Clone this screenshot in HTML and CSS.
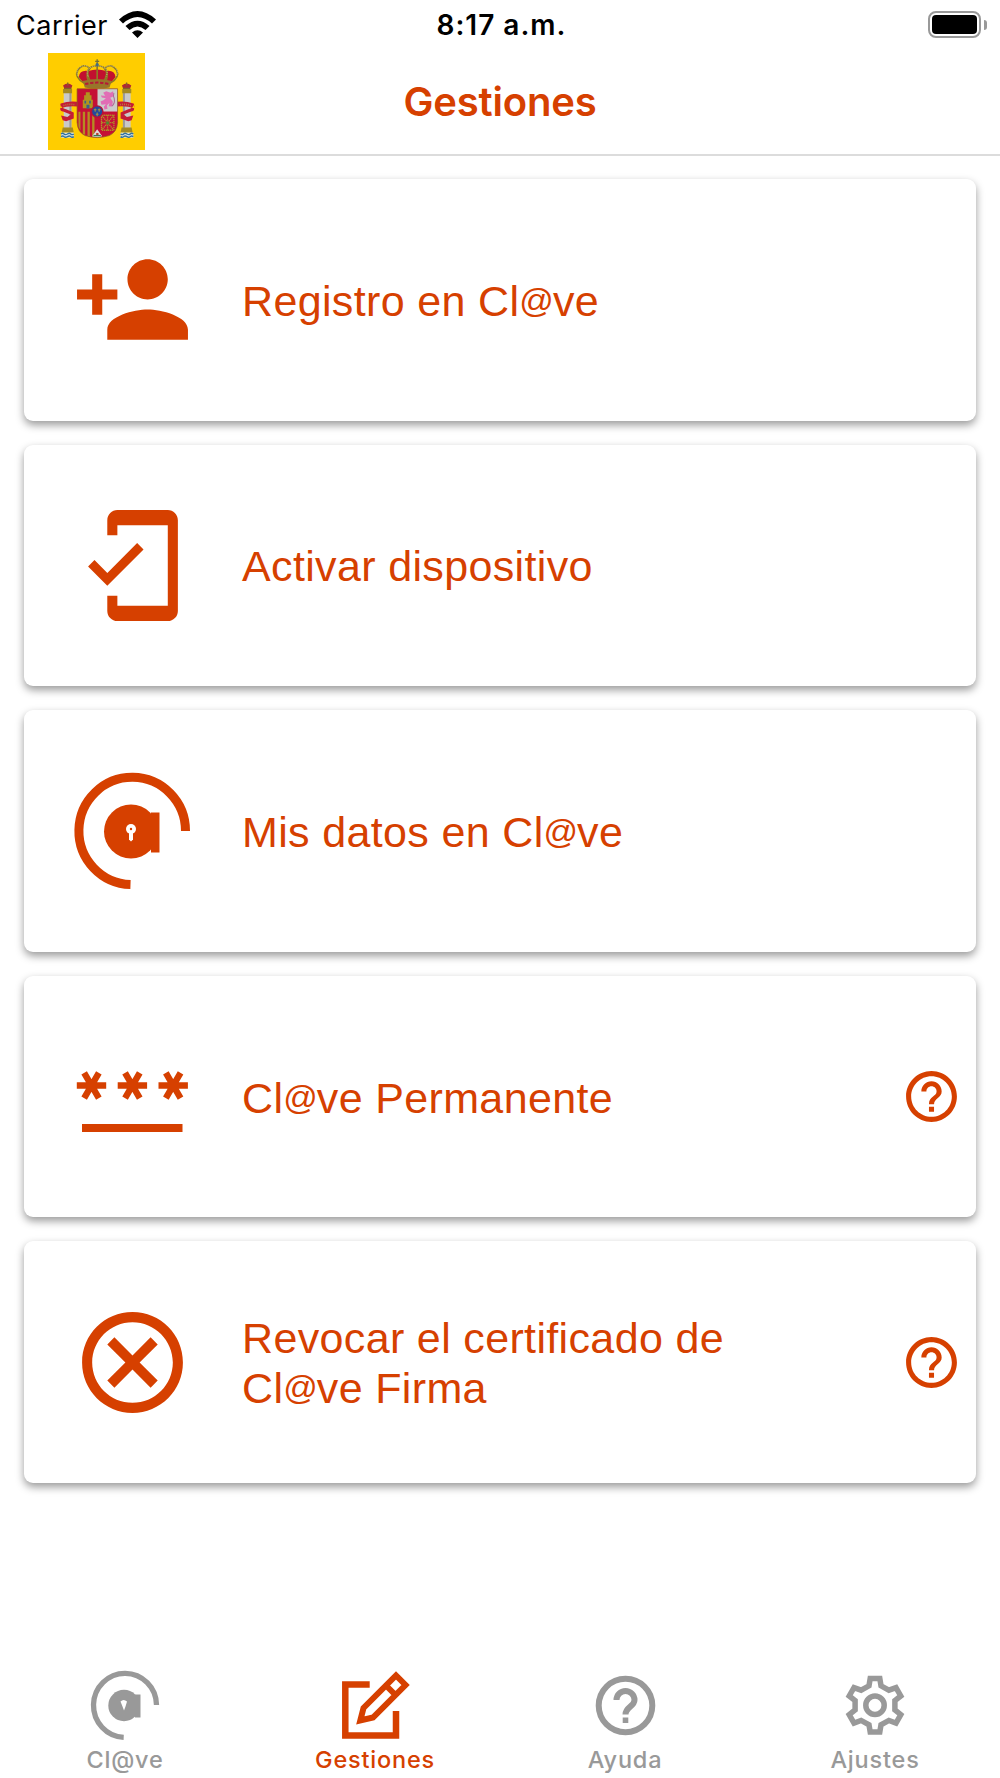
FILE: index.html
```html
<!DOCTYPE html>
<html lang="es">
<head>
    <meta charset="UTF-8">
    <meta name="viewport" content="width=device-width, initial-scale=1.0">
    <title>Gestiones</title>
    <link rel="stylesheet" href="styles.css">
</head>
<body>

    <div class="status-bar">
        <div class="carrier">
            <span>Carrier</span>
            <svg class="wifi" viewBox="0 0 37 27">
                <path d="M0 8.500Q18.500-8.500 37 8.500L33 12.500Q18.500-.5 4 12.500zM6.500 15Q18.500 4.500 30.500 15L26.500 19Q18.500 12 10.500 19zM13 21.500Q18.500 17 24 21.500L18.500 27z"/>
            </svg>
        </div>
        <div class="time">8:17 a.m.</div>
        <div class="battery">
            <div class="battery-body"></div>
            <div class="battery-tip"></div>
        </div>
    </div>

    <header class="header">
        <svg class="flag" viewBox="0 0 290 290">
            <rect width="290" height="290" fill="#ffcd00"/>
            <!-- crown -->
            <path d="M92 72Q95 50 120 54Q147 44 174 54Q199 50 202 72L186 92H108z" fill="#c2102f"/>
            <g fill="none" stroke="#8f7a24" stroke-width="5">
                <path d="M108 90Q78 72 89 51Q106 28 125 46Q112 62 120 82"/>
                <path d="M186 90Q216 72 205 51Q188 28 169 46Q182 62 174 82"/>
                <path d="M125 82Q105 40 147 38Q189 40 169 82M147 38V84"/>
            </g>
            <g fill="none" stroke="#e5dfbd" stroke-width="2" stroke-dasharray="3 3">
                <path d="M89 68Q80 42 108 38Q117 37 124 46M205 68Q214 42 186 38Q177 37 170 46M120 70Q108 42 147 38Q186 42 174 70"/>
            </g>
            <path d="M147 19V39M141 25h12" stroke="#777333" stroke-width="4"/>
            <circle cx="147" cy="35" r="5" fill="#446d83"/>
            <path d="M104 84Q147 72 190 84L184 103Q147 110 110 103z" fill="#98752a"/>
            <path d="M111 93Q147 84 183 93" fill="none" stroke="#b51937" stroke-width="6" stroke-dasharray="10 5"/>
            <!-- pillars -->
            <g id="pillar">
                <path d="M47 112h23v112H47z" fill="#c9c9c9"/>
                <path d="M64 112h6v112h-6z" fill="#999"/>
                <path d="M45 108h27v12H45zM44 223h30l3 15H41z" fill="#a48a22"/>
                <path d="M45 97q14-11 28 0l-4 10H49z" fill="#ad2836"/>
                <path d="M59 88v9M48 106h22" stroke="#806329" stroke-width="4"/>
                <path d="M39 238h38v15H39z" fill="#dce6e8"/>
                <path d="M39 242q5-4 9 0t10 0t10 0t9 0M39 250q5-4 9 0t10 0t10 0t9 0" fill="none" stroke="#33719c" stroke-width="4"/>
                <path d="M88 146Q64 142 38 151L36 165Q61 157 88 160zM37 151q1 14 17 17l23 10v18l-23 8-10-3-5-14 19 4 10-7-23-9Q33 176 37 151" fill="#c51c36"/>
                <path d="M46 157Q65 151 81 155" fill="none" stroke="#b67741" stroke-width="5" stroke-dasharray="3 3"/>
            </g>
            <use href="#pillar" transform="translate(294 0) scale(-1 1)"/>
            <!-- shield -->
            <path d="M87 107h121v101q-2 29-25 39-20 6-36 6t-36-6q-22-10-24-39z" fill="#c51035"/>
            <path d="M148 107h60v68h-60z" fill="#ccc"/>
            <path d="M91 176h6v56l-6-12zM104 176h7v69l-7-4zM118 176h7v74l-7-2zM132 176h7v76l-7-1z" fill="#b58c22"/>
            <path d="M104 165v-25h4v-14h5v-9h12v9h5v14h4v25z" fill="#b1931f"/>
            <path d="M115 166v-11h9v11M109 143h5v8h-5zM123 143h5v8h-5z" fill="#38628a"/>
            <path d="M165 119l9-5 13 5 8-5-1 17-8 3 8 12-3 14-10-1 3-10-8 8 2 10-9 2-2-8 6-8-13 2-3-10 9-4 7-6-12-2-3-6 13 1z" fill="#e16db5"/>
            <path d="M197 119q-3 9 1 17 3 15-7 23" fill="none" stroke="#ae6893" stroke-width="3"/>
            <g fill="none" stroke="#b19428" stroke-width="4" stroke-dasharray="4 2">
                <rect x="160" y="186" width="37" height="45"/>
                <path d="M178 186v48M160 208h38M161 187l35 43M196 187l-35 43"/>
            </g>
            <circle cx="178" cy="209" r="5" fill="#54832f"/>
            <circle cx="147" cy="175" r="19" fill="#b51239"/>
            <circle cx="147" cy="175" r="15" fill="#21499d"/>
            <path d="M137 170h8M149 170h8M143 183h8M141 166v10M153 166v10M147 178v11" stroke="#a69345" stroke-width="3"/>
            <path d="M147 228l15 21q-15 6-30 0z" fill="#ddd"/>
            <path d="M144 239h7v8h-7z" fill="#b74230"/>
            <path d="M136 247h22" stroke="#3e7a53" stroke-width="4"/>
            <path d="M87 107h121v101q-2 29-25 39-20 6-36 6t-36-6q-22-10-24-39z" fill="none" stroke="#8a5a20" stroke-width="2"/>
        </svg>
        <h1>Gestiones</h1>
    </header>

    <main class="cards">
        <div class="card">
            <svg class="card-icon" viewBox="0 0 24 24">
                <path d="M15 12c2.210 0 4-1.790 4-4s-1.790-4-4-4-4 1.790-4 4 1.790 4 4 4zm-9-2V7H4v3H1v2h3v3h2v-3h3v-2H6zm9 4c-2.670 0-8 1.340-8 4v2h16v-2c0-2.660-5.330-4-8-4z"/>
            </svg>
            <span class="card-title">Registro en Cl<span class="at">@</span>ve</span>
        </div>

        <div class="card">
            <svg class="card-icon" viewBox="0 0 24 24">
                <path d="M19 1H9c-1.100 0-2 .9-2 2v3h2V4h10v16H9v-2H7v3c0 1.100.9 2 2 2h10c1.100 0 2-.9 2-2V3c0-1.100-.9-2-2-2zM7.010 13.470l-2.550-2.550-1.270 1.270L7 16l7.190-7.190-1.270-1.270z"/>
            </svg>
            <span class="card-title">Activar dispositivo</span>
        </div>

        <div class="card">
            <svg class="card-icon" viewBox="0 0 121 121">
                <path d="M113.500 61A53.300 53.600 0 1 0 58.500 114.500" fill="none" stroke="currentColor" stroke-width="9"/>
                <circle cx="59" cy="61.500" r="27"/>
                <path d="M79 42.500h8.500v40H79z"/>
                <circle cx="59" cy="59" r="5" fill="#fff"/>
                <path d="M57 61h4v8.500l-2 2-2-2z" fill="#fff"/>
                <circle cx="59" cy="59" r="1.200"/>
            </svg>
            <span class="card-title">Mis datos en Cl<span class="at">@</span>ve</span>
        </div>

        <div class="card">
            <svg class="card-icon" viewBox="0 0 121 121">
                <g fill="none" stroke="currentColor" stroke-width="6.400">
                    <path d="M4.800 49.500h29.400M12.150 36.800l14.700 25.400M26.850 36.800L12.150 62.200"/>
                    <path d="M45.700 49.500h29.400M53.050 36.800l14.700 25.400M67.750 36.800L53.050 62.200"/>
                    <path d="M86.500 49.500h29.400M93.850 36.800l14.700 25.400M108.550 36.800L93.850 62.200"/>
                </g>
                <path d="M10 88h100.500v8H10z"/>
            </svg>
            <span class="card-title">Cl<span class="at">@</span>ve Permanente</span>
            <svg class="help-icon" viewBox="0 0 24 24">
                <path d="M11 18h2v-2h-2v2zm1-16C6.480 2 2 6.480 2 12s4.480 10 10 10 10-4.480 10-10S17.520 2 12 2zm0 18c-4.410 0-8-3.590-8-8s3.590-8 8-8 8 3.590 8 8-3.590 8-8 8zm0-14c-2.210 0-4 1.790-4 4h2c0-1.100.9-2 2-2s2 .9 2 2c0 2-3 1.750-3 5h2c0-2.250 3-2.500 3-5 0-2.210-1.790-4-4-4z"/>
            </svg>
        </div>

        <div class="card">
            <svg class="card-icon" viewBox="0 0 24 24">
                <path d="M12 2C6.470 2 2 6.470 2 12s4.470 10 10 10 10-4.470 10-10S17.530 2 12 2zm0 18c-4.410 0-8-3.590-8-8s3.590-8 8-8 8 3.590 8 8-3.590 8-8 8zm3.590-13L12 10.590 8.410 7 7 8.410 10.590 12 7 15.590 8.410 17 12 13.410 15.590 17 17 15.590 13.410 12 17 8.410z"/>
            </svg>
            <span class="card-title">Revocar el certificado de<br>Cl<span class="at">@</span>ve Firma</span>
            <svg class="help-icon" viewBox="0 0 24 24">
                <path d="M11 18h2v-2h-2v2zm1-16C6.480 2 2 6.480 2 12s4.480 10 10 10 10-4.480 10-10S17.520 2 12 2zm0 18c-4.410 0-8-3.590-8-8s3.590-8 8-8 8 3.590 8 8-3.590 8-8 8zm0-14c-2.210 0-4 1.790-4 4h2c0-1.100.9-2 2-2s2 .9 2 2c0 2-3 1.750-3 5h2c0-2.250 3-2.500 3-5 0-2.210-1.790-4-4-4z"/>
            </svg>
        </div>
    </main>

    <nav class="tab-bar">
        <a class="tab">
            <svg viewBox="0 0 70 70">
                <path d="M66.500 35A31.500 32 0 1 0 33.700 67.300" fill="none" stroke="currentColor" stroke-width="5.300"/>
                <circle cx="34" cy="35.500" r="15.700"/>
                <path d="M45 24.500h5.500v23H45z"/>
                <path d="M30.500 31.500q3-3 6.500 0l-1.500 5-1.500 4-1.500-4z" fill="#fff"/>
            </svg>
            <span>Cl@ve</span>
        </a>
        <a class="tab active">
            <svg viewBox="0 0 70 70">
                <g fill="none" stroke="currentColor">
                    <path d="M29.700 14.500H5.300v51H56V41" stroke-width="6.500"/>
                    <path d="M20.300 50.500L23.500 38 56 5.500l9.500 9.500L33 47.500zM46 15.500L55.500 25" stroke-width="6"/>
                </g>
            </svg>
            <span>Gestiones</span>
        </a>
        <a class="tab">
            <svg viewBox="0 0 70 70">
                <g fill="none" stroke="currentColor" stroke-width="6">
                    <circle cx="35.500" cy="35.500" r="26.800"/>
                    <path d="M26.500 30a9 9 0 0 1 18 0c0 6.500-9 7-9 14.500"/>
                </g>
                <path d="M32.700 47.500h5.600V53h-5.600z"/>
            </svg>
            <span>Ayuda</span>
        </a>
        <a class="tab">
            <svg viewBox="-35 -35 70 70">
                <g fill="none" stroke="currentColor" stroke-width="5.500">
                    <path d="M-4.800-26.500H4.800L6-19.200 13.900-14.800 21-17.400 25.800-9 19.900-4.300V4.900L25.800 9.600 21 18 13.900 15.400 6 19.800 4.800 27H-4.800L-6 19.800-13.900 15.400-21 18-25.800 9.600-19.900 4.900V-4.300L-25.800-9-21-17.400-13.900-14.800-6-19.200z"/>
                    <circle cy=".3" r="9.200"/>
                </g>
            </svg>
            <span>Ajustes</span>
        </a>
    </nav>

</body>
</html>
```
FILE: styles.css
```css
* {
    box-sizing: border-box;
}

body {
    display: flex;
    flex-direction: column;
    height: 1778px;
    margin: 0;
    background: #fff;
    color: #d64000;
    font-family: Inter, "Liberation Sans", sans-serif;
    overflow: hidden;
}

svg {
    display: block;
    flex: none;
    fill: currentColor;
}

.status-bar {
    display: grid;
    grid-template-columns: 1fr auto 1fr;
    align-items: center;
    height: 50px;
    padding: 0 13px 0 16px;
    color: #000;
    font-size: 27px;
}

.carrier {
    display: flex;
    align-items: center;
    gap: 11px;
    letter-spacing: 0.5px;
}

.wifi {
    width: 37px;
    height: 27px;
    margin-bottom: 2px;
}

.time {
    font-size: 28px;
    font-weight: 600;
    letter-spacing: 1px;
}

.battery {
    display: flex;
    align-items: center;
    justify-content: flex-end;
    gap: 3px;
    margin-bottom: 1px;
}

.battery-body {
    width: 53px;
    height: 27px;
    padding: 2px;
    border: 2px solid #999;
    border-radius: 8px;
}

.battery-body::before {
    content: "";
    display: block;
    height: 100%;
    border-radius: 4px;
    background: #000;
}

.battery-tip {
    width: 3px;
    height: 10px;
    border-radius: 0 4px 4px 0;
    background: #999;
}

.header {
    display: grid;
    grid-template-columns: 97px 1fr 97px;
    align-items: center;
    height: 106px;
    padding: 0 48px 2px;
    border-bottom: 2px solid #dcdcdc;
}

.flag {
    width: 97px;
    height: 97px;
}

h1 {
    margin: 0;
    font-size: 40px;
    font-weight: 600;
    letter-spacing: -0.2px;
    text-align: center;
}

.cards {
    display: flex;
    flex-direction: column;
    flex: 1;
    gap: 24px;
    padding: 23px 24px 0;
}

.card {
    display: flex;
    align-items: center;
    height: 241.6px;
    padding: 0 14px 0 48px;
    border-radius: 9px;
    background: #fff;
    box-shadow: 0 4px 8px rgba(0, 0, 0, 0.4);
}

.card-icon {
    width: 121px;
    height: 121px;
}

.card-title {
    flex: 1;
    margin-left: 49px;
    padding-top: 2px;
    font-family: "Liberation Sans", Arial, sans-serif;
    font-size: 43px;
    line-height: 50px;
    letter-spacing: 0.35px;
}

.at {
    font-size: 34px;
    line-height: 1;
    letter-spacing: -1px;
    vertical-align: 4px;
}

.help-icon {
    width: 61px;
    height: 61px;
}

.tab-bar {
    display: grid;
    grid-template-columns: repeat(4, 1fr);
    height: 108px;
}

.tab {
    display: flex;
    flex-direction: column;
    align-items: center;
    color: #999;
    font-size: 23.5px;
    font-weight: 500;
    letter-spacing: 0.8px;
}

.tab svg {
    width: 70px;
    height: 70px;
}

.tab span {
    line-height: 40px;
}

.active {
    color: #d64000;
}
```
